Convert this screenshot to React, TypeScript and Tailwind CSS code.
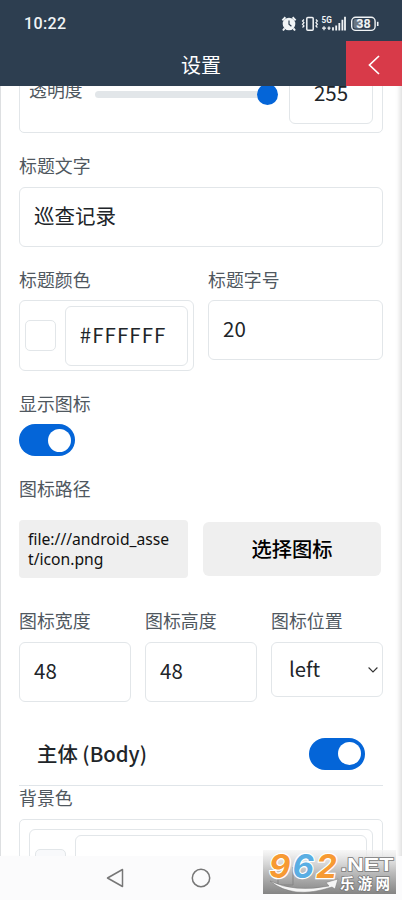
import { useState } from "react";
import type { ReactNode } from "react";

const BORDER = "border border-[#e2e6e9]";

function Label({ children }: { children: ReactNode }) {
  return <div className="h-6 text-[17.9px] leading-[23px] text-[#50585f] whitespace-nowrap">{children}</div>;
}

function TextInput({ value, className = "" }: { value: string; className?: string }) {
  return (
    <div
      className={`${BORDER} h-[60px] rounded-md bg-white px-3.5 text-[20.5px] leading-[55px] text-[#212529] whitespace-nowrap ${className}`}
    >
      {value}
    </div>
  );
}

function Toggle() {
  const [on, setOn] = useState(true);
  return (
    <button
      onClick={() => setOn(!on)}
      className={`flex h-8 w-14 items-center rounded-full px-1 ${on ? "justify-end bg-[#0465d8]" : "justify-start bg-gray-300"}`}
    >
      <span className="h-[23px] w-[23px] rounded-full bg-white" />
    </button>
  );
}

function StatusIcons() {
  return (
    <svg className="h-6 w-[106px]" viewBox="0 0 106 24" fill="none" stroke="#f1f4f6">
      {/* alarm */}
      <circle cx="11" cy="12" r="6.3" fill="#f1f4f6" stroke="none" />
      <path d="M4.4 8.4 7.4 5.3M17.6 8.4l-3-3.1M6.6 16.4l-1.6 2.1M15.4 16.4l1.6 2.1" strokeWidth="2" />
      <path d="M11 8.5V12.3l2.4 2" stroke="#2d3e50" strokeWidth="1.2" />
      {/* vibrate */}
      <rect x="28.8" y="5.5" width="6.4" height="12.8" rx="1" strokeWidth="1.5" />
      <path d="M26 7.5l-1.5 1.6L26 10.7l-1.5 1.6L26 13.9l-1.5 1.6M37.9 7.5l1.5 1.6-1.5 1.6 1.5 1.6-1.5 1.6 1.5 1.6" strokeWidth="1.2" />
      {/* signal */}
      <text x="43.6" y="10.8" fontSize="8.2" fontWeight="700" fill="#f1f4f6" stroke="none" fontFamily="Roboto, sans-serif">
        5G
      </text>
      <path d="M44 16.2h4M46 14.2v4M49.5 16.2h3M51 14.5v3.5" strokeWidth="1.3" />
      <path d="M55 18.5v-3.2M58.2 18.5v-5M61.3 18.5v-7.5M64.4 18.5V7.8M67 18.5V4.8" strokeWidth="1.8" />
      {/* battery */}
      <rect x="73.7" y="5.2" width="23.4" height="13.2" rx="4" strokeWidth="1.4" />
      <rect x="75.5" y="7" width="9" height="9.6" rx="2" fill="#697683" stroke="none" />
      <path d="M99.7 9.8v4.2" strokeWidth="1.6" />
      <text x="85.5" y="16.2" textAnchor="middle" fontSize="12.5" fontWeight="700" fill="#f1f4f6" stroke="none" fontFamily="Roboto, sans-serif">
        38
      </text>
    </svg>
  );
}

function Watermark() {
  return (
    <svg className="absolute bottom-[6px] left-[263px] h-[44px] w-[133px]" viewBox="0 0 133 44">
      <defs>
        <linearGradient id="shade" x1="0" y1="0" x2="0" y2="1">
          <stop offset="0" stopColor="#f4f4f4" stopOpacity="0.7" />
          <stop offset="0.5" stopColor="#bdbdbd" />
          <stop offset="1" stopColor="#848484" />
        </linearGradient>
      </defs>
      <rect width="133" height="44" fill="url(#shade)" />
      <path d="M15 23v12h15V17" fill="none" stroke="#858585" strokeWidth="1" />
      <path d="M7 31Q32 43 66 36l-3-3.5 12-3.5-3 10-3-2Q30 50 7 31Z" fill="#f5f5f5" stroke="#777" strokeWidth="0.5" />
      <g fontFamily="Inter, sans-serif" fontSize="33" fontWeight="700" fontStyle="italic" stroke="#fff" strokeWidth="2.4" paintOrder="stroke">
        <text x="6" y="27.5" fill="#f79a33">9</text>
        <text x="29.5" y="27.5" fill="#5aaee3">6</text>
        <text x="53" y="27.5" fill="#f79a33">2</text>
      </g>
      <g fill="#fff" stroke="#777" strokeWidth="1.4" paintOrder="stroke">
        <text x="77.5" y="21" textLength="53" lengthAdjust="spacingAndGlyphs" fontFamily="'Liberation Sans', sans-serif" fontSize="19" fontWeight="700">.NET</text>
        <text x="77" y="38.5" textLength="50" fontFamily="'Noto Sans CJK SC', sans-serif" fontSize="14.5" fontWeight="700">乐游网</text>
      </g>
    </svg>
  );
}

export default function App() {
  return (
    <div className="relative flex h-[900px] w-[402px] flex-col overflow-hidden bg-white font-['Noto_Sans_CJK_SC',sans-serif]">
      <header className="h-[86px] shrink-0 bg-[#2d3e50] text-white">
        <div className="flex h-[41px] items-center justify-between pt-[7px] pr-[18px] pl-6">
          <span className="font-['Roboto',sans-serif] text-[16px] font-medium tracking-[0.35px] text-[#f1f4f6]">10:22</span>
          <StatusIcons />
        </div>
        <div className="grid h-[45px] grid-cols-[56px_1fr_56px]">
          <span />
          <h1 className="text-center text-[20px] leading-[47px]">设置</h1>
          <button className="flex items-center justify-center bg-[#d83a49]">
            <svg className="h-5 w-3" viewBox="0 0 12 20" fill="none" stroke="white" strokeWidth="1.7">
              <path d="M11 1 1.5 10 11 19" />
            </svg>
          </button>
        </div>
      </header>

      <main className="min-h-0 flex-1 overflow-hidden border-l border-[#dddfe1] bg-white pr-[19px] pl-[18px] shadow-[inset_-6px_0_5px_-4px_#dcdcdc]">
        {/* scrolled past its top edge */}
        <div className={`${BORDER} -mt-10 flex h-[87px] items-start rounded-[5px] pr-[9px] pl-[9px]`}>
          <div className="mt-[31px]">
            <Label>透明度</Label>
          </div>
          <div className="mt-[37px] ml-3 flex h-5 w-[184px] items-center">
            <div className="h-[7px] w-[164px] rounded-l-full bg-[#e2e6e9]" />
            <div className="-ml-0.5 h-[21px] w-[21px] rounded-full bg-[#0465d8]" />
          </div>
          <TextInput value="255" className="mt-[17px] ml-auto w-[84px] text-center" />
        </div>

        <div className="mt-[21px]">
          <Label>标题文字</Label>
          <TextInput value="巡查记录" className="mt-[9px]" />
        </div>

        <div className="mt-[21px] grid grid-cols-2 gap-3.5">
          <div>
            <Label>标题颜色</Label>
            <div className={`${BORDER} mt-2 flex h-[71px] items-center rounded-md px-[5px]`}>
              <span className={`${BORDER} h-[31px] w-[31px] rounded-[5px]`} />
              <TextInput value="#FFFFFF" className="ml-[9px] w-[124px] tracking-[1.05px]" />
            </div>
          </div>
          <div>
            <Label>标题字号</Label>
            <TextInput value="20" className="mt-2" />
          </div>
        </div>

        <div className="mt-[21px]">
          <Label>显示图标</Label>
          <div className="mt-2">
            <Toggle />
          </div>
        </div>

        <div className="mt-[21px]">
          <Label>图标路径</Label>
          <div className="mt-[19px] flex items-center gap-[15px]">
            <div className="h-[58px] w-[169px] rounded bg-[#efefef] px-[9px] pt-[9px] font-['Noto_Sans',sans-serif] text-[15.7px] leading-5 text-[#111]">
              file:///android_asse
              <br />
              t/icon.png
            </div>
            <button className="h-[54px] w-[178px] rounded-md bg-[#efefef] pb-px text-[20.3px] font-medium text-black">
              选择图标
            </button>
          </div>
        </div>

        <div className="mt-[31px] grid grid-cols-3 gap-3.5">
          <div>
            <Label>图标宽度</Label>
            <TextInput value="48" className="mt-[9px]" />
          </div>
          <div>
            <Label>图标高度</Label>
            <TextInput value="48" className="mt-[9px]" />
          </div>
          <div>
            <Label>图标位置</Label>
            <div className={`${BORDER} mt-[9px] flex h-[55px] items-center justify-between rounded-md pr-1 pl-[17px] text-[20.3px] text-[#212529]`}>
              <span className="pb-0.5">left</span>
              <svg className="h-2 w-2.5" viewBox="0 0 10 8" fill="none" stroke="#333" strokeWidth="1.1">
                <path d="M.6 1.5 5 6l4.4-4.5" />
              </svg>
            </div>
          </div>
        </div>

        <div className="mt-5 flex h-16 items-center justify-between border-b border-[#e0e5e9] pr-[18px] pl-[18px]">
          <h2 className="text-[20.4px] font-medium text-[#212529]">主体 (Body)</h2>
          <Toggle />
        </div>

        <Label>背景色</Label>
        <div className={`${BORDER} mt-[9px] h-[100px] rounded-[5px] p-[9px]`}>
          <div className={`${BORDER} flex h-[71px] items-center rounded-md px-[5px]`}>
            <span className={`${BORDER} h-[31px] w-[31px] rounded-[5px] bg-[#f8f9fb]`} />
            <TextInput value="" className="ml-[9px] flex-1" />
          </div>
        </div>
      </main>

      <nav className="flex h-11 shrink-0 items-center bg-[#fbfbfc]">
        <svg className="ml-[106px] h-[20px] w-[18px]" viewBox="0 0 18 20" fill="none" stroke="#777" strokeWidth="1.5" strokeLinejoin="round">
          <path d="M16.5 1.5v17L1.5 10Z" />
        </svg>
        <svg className="ml-[67px] h-5 w-5" viewBox="0 0 20 20" fill="none" stroke="#777" strokeWidth="1.5">
          <circle cx="10" cy="10" r="8.7" />
        </svg>
      </nav>
      <Watermark />
    </div>
  );
}
